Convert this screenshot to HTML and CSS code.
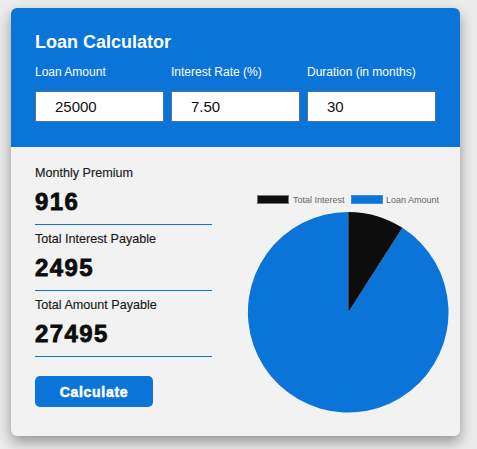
FILE: index.html
```html
<!DOCTYPE html>
<html>
<head>
<meta charset="utf-8">
<link rel="stylesheet" href="styles.css">
</head>
<body>
<div class="card">
  <div class="header">
    <h1 class="title">Loan Calculator</h1>
    <div class="fields">
      <div class="field">
        <label class="label">Loan Amount</label>
        <input class="input" type="text" value="25000">
      </div>
      <div class="field">
        <label class="label">Interest Rate (%)</label>
        <input class="input" type="text" value="7.50">
      </div>
      <div class="field">
        <label class="label">Duration (in months)</label>
        <input class="input" type="text" value="30">
      </div>
    </div>
  </div>
  <div class="body">
    <div class="results">
      <div class="result first">
        <div class="rlabel">Monthly Premium</div>
        <div class="rvalue">916</div>
      </div>
      <div class="result">
        <div class="rlabel">Total Interest Payable</div>
        <div class="rvalue">2495</div>
      </div>
      <div class="result">
        <div class="rlabel">Total Amount Payable</div>
        <div class="rvalue">27495</div>
      </div>
      <button class="btn">Calculate</button>
    </div>
    <div class="chart">
      <svg class="chart-svg" width="248" height="280" viewBox="0 0 248 280">
        <rect x="45.5" y="48.5" width="31" height="8" fill="#0d0d0d" stroke="#777" stroke-width="1"/>
        <text x="81" y="55.5" class="legend-text">Total Interest</text>
        <rect x="139.5" y="48.5" width="31" height="8" fill="#0a74d8" stroke="#3a8ee0" stroke-width="1"/>
        <text x="174" y="55.5" class="legend-text">Loan Amount</text>
        <path d="M136.3 165.2 L190.4 80.8 A100.3 100.3 0 1 1 136.3 64.9 Z" fill="#0a74d8"/>
        <path d="M136.3 165.2 L136.3 64.9 A100.3 100.3 0 0 1 190.4 80.8 Z" fill="#0d0d0d"/>
      </svg>
    </div>
  </div>
</div>
</body>
</html>
```
FILE: styles.css
```css
html, body {
  margin: 0;
  padding: 0;
}
body {
  background: #ececec;
  font-family: "Liberation Sans", Arial, sans-serif;
  padding: 8px 0 0 11px;
  width: 477px;
  height: 449px;
  box-sizing: border-box;
  overflow: hidden;
}
.card {
  width: 449px;
  height: 428px;
  border-radius: 6px;
  overflow: hidden;
  background: #f2f2f2;
  box-shadow: 0 6px 14px rgba(0, 0, 0, 0.38);
}
.header {
  background: #0a74d8;
  padding: 23px 24px 25px 24px;
  height: 139px;
  box-sizing: border-box;
}
.title {
  margin: 0 0 12px 0;
  font-size: 18px;
  line-height: 22px;
  font-weight: bold;
  color: #ffffff;
}
.fields {
  display: flex;
  gap: 7px;
}
.field {
  display: flex;
  flex-direction: column;
  width: 129px;
  flex: none;
}
.label {
  font-size: 12px;
  line-height: 14px;
  color: #ffffff;
  margin: 0 0 12px 0;
}
.input {
  width: 129px;
  height: 31px;
  box-sizing: border-box;
  border: 1px solid #56718f;
  background: #ffffff;
  font-family: "Liberation Sans", Arial, sans-serif;
  font-size: 15px;
  color: #111;
  padding: 0 0 0 19px;
  margin: 0;
  outline: none;
}
.body {
  display: flex;
}
.results {
  width: 177px;
  margin-left: 24px;
  padding-top: 19px;
}
.result {
  padding: 7px 0 8px 0;
  border-bottom: 1px solid #0a74d8;
}
.result.first {
  padding-top: 0;
}
.rlabel {
  font-size: 12.6px;
  line-height: 15px;
  color: #1a1a1a;
  -webkit-text-stroke: 0.15px #1a1a1a;
}
.rvalue {
  margin-top: 7px;
  font-size: 24px;
  line-height: 28px;
  font-weight: bold;
  color: #0d0d0d;
  letter-spacing: 1.4px;
  -webkit-text-stroke: 0.8px #0d0d0d;
}
.btn {
  margin-top: 19px;
  width: 118px;
  height: 31px;
  border: none;
  border-radius: 5px;
  background: #0a74d8;
  color: #ffffff;
  font-family: "Liberation Sans", Arial, sans-serif;
  font-size: 14px;
  font-weight: bold;
  letter-spacing: 0.7px;
  -webkit-text-stroke: 0.5px #ffffff;
  padding: 0;
  cursor: pointer;
}
.chart {
  width: 248px;
}
.chart-svg {
  display: block;
}
.legend-text {
  font-family: "Liberation Sans", Arial, sans-serif;
  font-size: 9px;
  fill: #666666;
}
```
